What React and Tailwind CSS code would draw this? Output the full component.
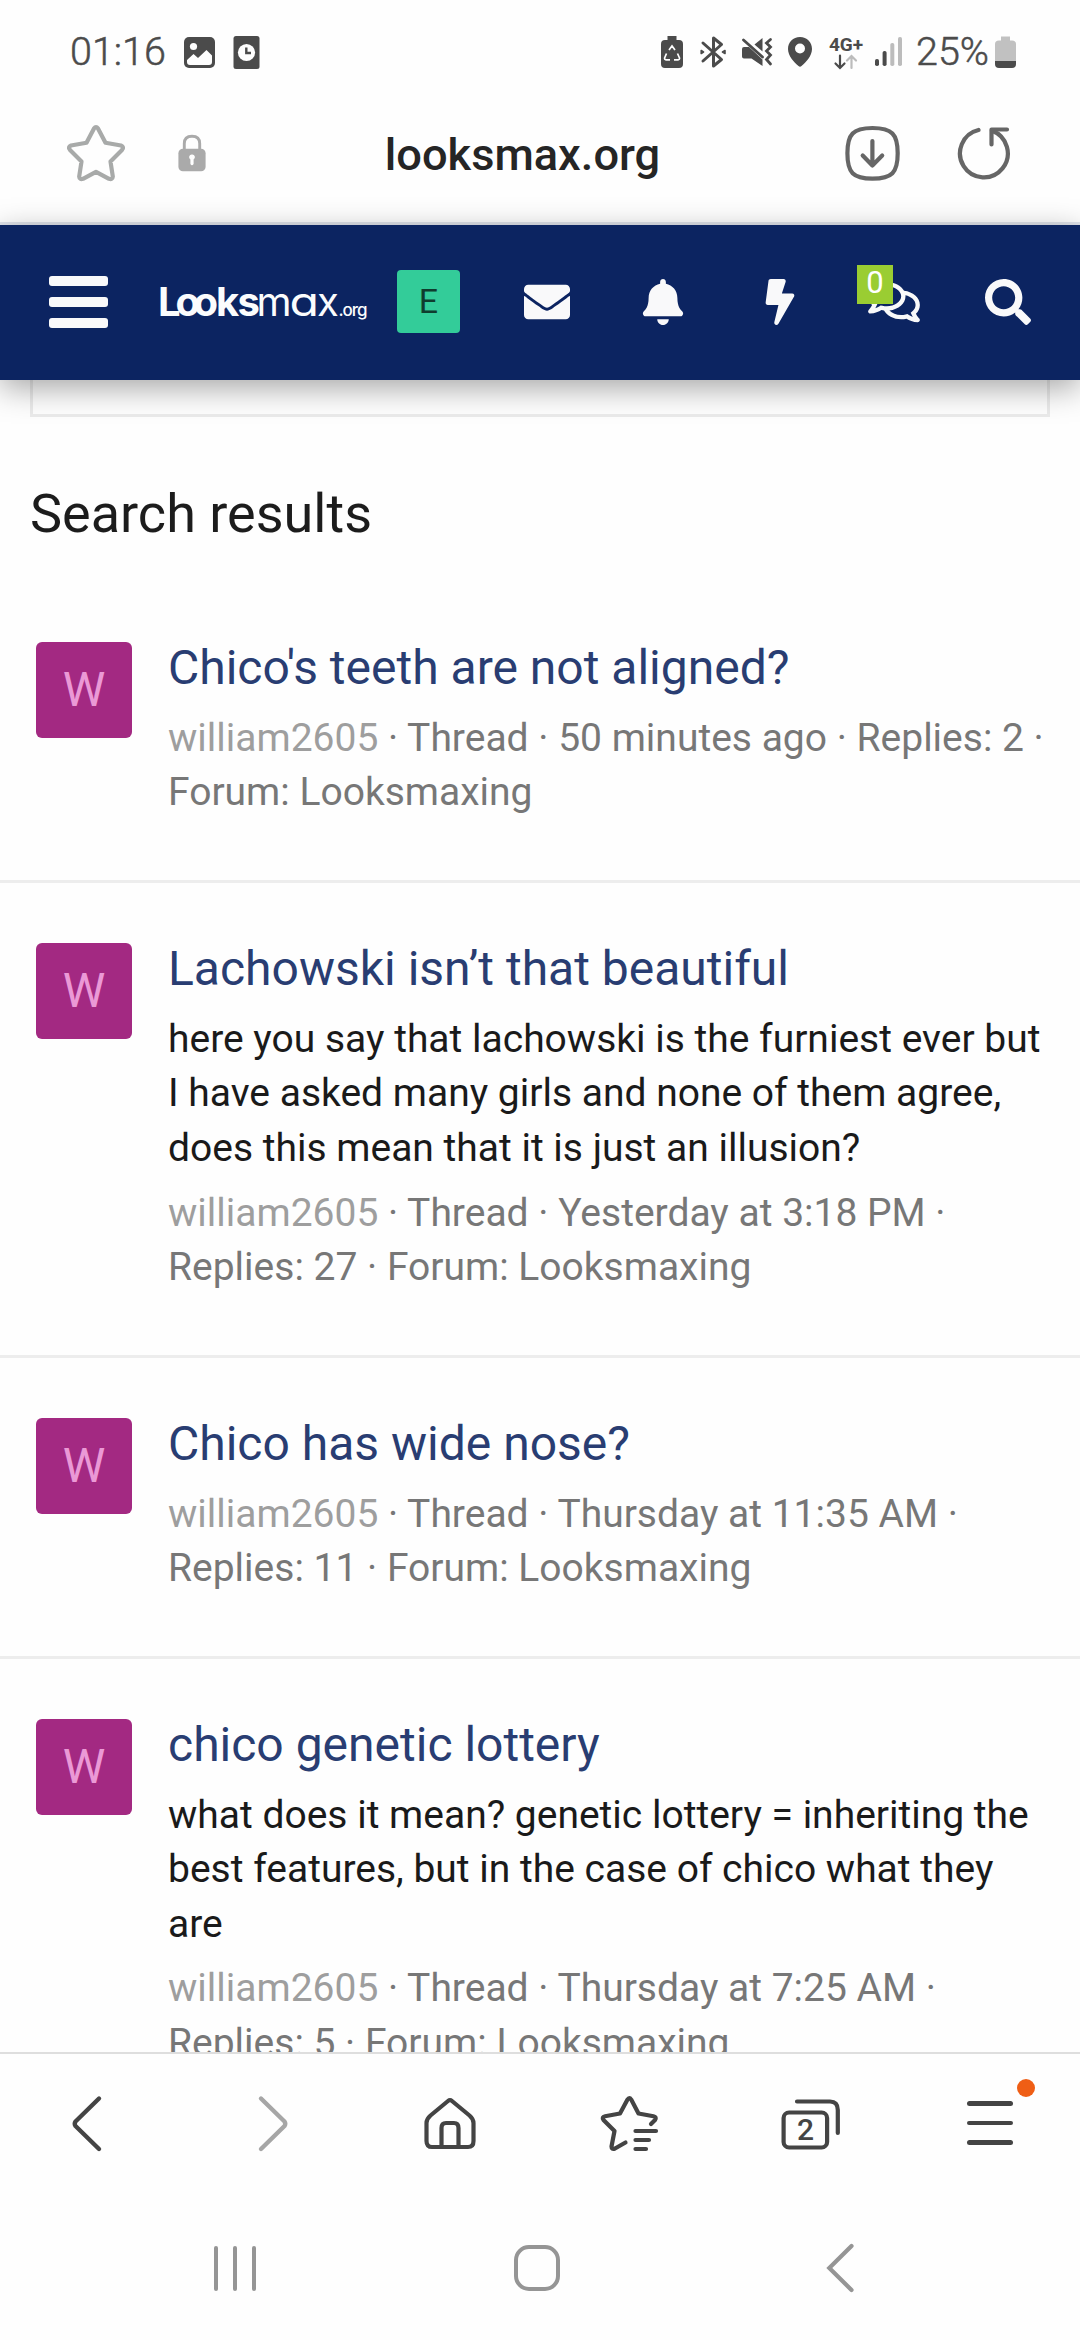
import React from 'react';
import { FaBell, FaBolt, FaEnvelope, FaRegComments, FaSearch } from 'react-icons/fa';

const results = [
    {
        title: "Chico's teeth are not aligned?",
        lines: ['50 minutes ago · Replies: 2 ·', 'Forum: Looksmaxing'],
    },
    {
        title: 'Lachowski isn’t that beautiful',
        snippet: [
            'here you say that lachowski is the furniest ever but',
            'I have asked many girls and none of them agree,',
            'does this mean that it is just an illusion?',
        ],
        lines: ['Yesterday at 3:18 PM ·', 'Replies: 27 · Forum: Looksmaxing'],
    },
    {
        title: 'Chico has wide nose?',
        lines: ['Thursday at 11:35 AM ·', 'Replies: 11 · Forum: Looksmaxing'],
    },
    {
        title: 'chico genetic lottery',
        snippet: [
            'what does it mean? genetic lottery = inheriting the',
            'best features, but in the case of chico what they',
            'are',
        ],
        lines: ['Thursday at 7:25 AM ·', 'Replies: 5 · Forum: Looksmaxing'],
    },
];

const StatusBar = () => (
    <div className="flex h-[104px] shrink-0 items-center pl-[70px] pr-[63px] text-[#4b4b4b]">
        <span className="w-[114px] whitespace-nowrap text-[39.5px] leading-[40px] font-light [-webkit-text-stroke:0.5px_#4b4b4b]">01:16</span>
        <svg className="h-[40px] w-[32px]" viewBox="0 0 32 40" fill="#4b4b4b">
            <rect x="0" y="5" width="31" height="31" rx="5" />
            <circle cx="9.5" cy="14.5" r="3.6" fill="#fefefe" />
            <path d="M3 28 L9.5 22 L14 26 L22.5 18 L28 23.5 V30 Q28 33 25 33 H6 Q3 33 3 30 Z" fill="#fefefe" />
        </svg>
        <svg className="ml-[17px] h-[40px] w-[28px]" viewBox="0 0 28 40" fill="#4b4b4b">
            <rect x="0.5" y="4" width="26" height="33" rx="2.5" />
            <circle cx="13.5" cy="20.5" r="8.6" fill="#fefefe" />
            <path d="M13.3 15.5 V21 H18" fill="none" stroke="#4b4b4b" strokeWidth="2.4" />
        </svg>
        <svg className="ml-auto h-[40px] w-[24px]" viewBox="0 0 24 40" fill="#4b4b4b">
            <path d="M7.5 4 H16.5 V8 H19 Q23 8 23 12 V32 Q23 36 19 36 H5 Q1 36 1 32 V12 Q1 8 5 8 H7.5 Z" />
            <path d="M9 18 L12 14 L15 18 M17.5 21.5 L19.5 26 Q19.8 27.7 18 27.8 H14 M6.5 21.5 L4.6 26 Q4.3 27.7 6 27.8 H10" fill="none" stroke="#fefefe" strokeWidth="1.7" />
        </svg>
        <svg className="ml-[15px] h-[40px] w-[28px]" viewBox="0 0 28 40" fill="none" stroke="#4b4b4b" strokeWidth="3" strokeLinejoin="round" strokeLinecap="round">
            <path d="M4 11 L22.5 27.5 L14.5 34 V6 L22.5 12.5 L4 29" />
            <path d="M2.2 18.5 L4.5 20 L2.2 21.5 Z M26 18.5 L23.5 20 L26 21.5 Z" fill="#4b4b4b" strokeWidth="1.6" />
        </svg>
        <svg className="ml-[14px] h-[40px] w-[32px]" viewBox="0 0 32 40" fill="#4b4b4b">
            <path d="M3 15 H8 L21.5 27.5 V34 L10.5 26.5 H3 Q1 26.5 1 24.5 V17 Q1 15 3 15 Z" />
            <path d="M21.5 6 V19.5 L13.5 12.5 Z" />
            <path d="M2.5 8 L21.5 25" stroke="#4b4b4b" strokeWidth="2.8" strokeLinecap="round" />
            <path d="M29.5 7.5 L25.5 11 L29.5 15 L25.5 19 L29.5 23 L25.5 27.5 L29.5 32" fill="none" stroke="#4b4b4b" strokeWidth="2.8" strokeLinecap="round" />
        </svg>
        <svg className="ml-[14px] h-[40px] w-[26px]" viewBox="0 0 26 40" fill="#4b4b4b">
            <path fillRule="evenodd" d="M13 5 C20 5 25 10 25 17 C25 24 19 30 14.5 34 Q13 35.3 11.5 34 C7 30 1 24 1 17 C1 10 6 5 13 5 Z M13 11.5 A5 5 0 1 0 13 21.5 A5 5 0 1 0 13 11.5 Z" />
        </svg>
        <div className="ml-[16px] flex h-[40px] w-[34px] flex-col items-center pt-[4px]">
            <span className="text-[19px] leading-[17px] font-bold">4G+</span>
            <svg className="mt-[1px] h-[16px] w-[26px]" viewBox="0 0 26 16" fill="none" strokeWidth="2.2" strokeLinecap="round">
                <path d="M7 1.5 V13.5 M2.5 9.5 L7 14 L11.5 9.5" stroke="#4b4b4b" />
                <path d="M18.5 14 V2 M14 6.5 L18.5 2 L23 6.5" stroke="#bcbcbc" />
            </svg>
        </div>
        <svg className="ml-[11px] h-[40px] w-[29px]" viewBox="0 0 29 40" fill="#4b4b4b">
            <rect x="1" y="27" width="4" height="7" rx="1.8" />
            <rect x="8.6" y="19" width="4" height="15" rx="1.8" />
            <rect x="16.3" y="11" width="4" height="23" rx="1.8" fill="#bcbcbc" />
            <rect x="24" y="5" width="4" height="29" rx="1.8" fill="#bcbcbc" />
        </svg>
        <span className="ml-[13px] w-[78px] whitespace-nowrap text-[39.5px] leading-[40px] font-light [-webkit-text-stroke:0.5px_#4b4b4b]">25%</span>
        <svg className="h-[40px] w-[23px]" viewBox="0 0 23 40">
            <path d="M7 4.5 H16 V8.5 H18 Q22 8.5 22 12 V29 H1 V12 Q1 8.5 5 8.5 H7 Z" fill="#c1c1c1" />
            <path d="M1 29 H22 V32 Q22 36 18 36 H5 Q1 36 1 32 Z" fill="#4b4b4b" />
        </svg>
    </div>
);

const AddressBar = () => (
    <div className="flex h-[121px] shrink-0 items-start border-b-[3px] border-[#e1e4eb] pl-[66px] pr-[68px] pt-[19px]">
        <svg className="h-[60px] w-[60px]" viewBox="0 0 60 60" fill="none" stroke="#a8aaa9" strokeWidth="4.2" strokeLinejoin="round">
            <path d="M28 5.5 Q30 2.5 32 5.5 L39.5 19.8 L55 22.5 Q58.5 24 56 27 L44.5 38.5 L46.8 53.5 Q46.5 57 43 55.8 L30 48.8 L17 55.8 Q13.5 57 13.2 53.5 L15.5 38.5 L4 27 Q1.5 24 5 22.5 L20.5 19.8 Z" />
        </svg>
        <svg className="ml-[50px] h-[60px] w-[32px]" viewBox="0 0 32 60" fill="#aaaaaa">
            <path d="M8.3 28 V20.5 Q8.3 13.2 16 13.2 Q23.7 13.2 23.7 20.5 V28" fill="none" stroke="#aaaaaa" strokeWidth="2.9" />
            <rect x="2.4" y="25.7" width="27.2" height="22.6" rx="4.5" />
            <path d="M16 31.5 A2.7 2.7 0 0 1 17.6 36.5 V41 Q16 43.5 14.4 41 V36.5 A2.7 2.7 0 0 1 16 31.5 Z" fill="#fefefe" />
        </svg>
        <div className="flex-1 pt-[5px] pr-[5px] text-center text-[45.2px] leading-[54px] font-medium text-[#252525]">looksmax.org</div>
        <svg className="h-[60px] w-[60px]" viewBox="0 0 60 60" fill="none" stroke="#666666" strokeWidth="4.2" strokeLinecap="round" strokeLinejoin="round">
            <path d="M30.5 5 C50 5 55.7 11 55.7 30.3 C55.7 49.6 50 55.6 30.5 55.6 C11 55.6 5.4 49.6 5.4 30.3 C5.4 11 11 5 30.5 5 Z" />
            <path d="M30.4 18 V42.5 M20.7 32.5 L30.4 42.5 L40.2 32.5" />
        </svg>
        <svg className="ml-[54px] h-[60px] w-[56px]" viewBox="0 0 56 60" fill="none" stroke="#666666" strokeWidth="4.2" strokeLinecap="round" strokeLinejoin="round">
            <path d="M22.5 7 A23.9 24 0 1 0 36 7.8" />
            <path d="M51 6.5 H35.5 V21.5" />
        </svg>
    </div>
);

// cv11 switches Inter to the single-storey "a" of the wordmark
const Logo = () => (
    <svg className="ml-[51px] h-[50px] w-[210px] font-['Inter',sans-serif] [font-feature-settings:'cv11']" viewBox="0 0 210 50" fill="#fbfcfd" fontSize="40">
        <text x="-1 16.5 34.5 57 78.5" y="39" fontWeight="650">Looks</text>
        <text y="39" fontWeight="400">
            <tspan x="97.5">m</tspan>
            <tspan x="130.5" textLength="29.5" lengthAdjust="spacingAndGlyphs">a</tspan>
            <tspan x="158">x</tspan>
        </text>
        <text x="179.5" y="39" fontSize="17" fontWeight="500" textLength="29">.org</text>
    </svg>
);

const NavBar = () => (
    <div className="relative z-10 flex h-[155px] shrink-0 items-center bg-[#0c2461] pl-[49px] pb-[2px] text-[46px] text-[#f9f9fa] shadow-[0_8px_30px_rgba(0,0,0,0.35)]">
        <div className="flex w-[59px] flex-col gap-[11px]">
            <div className="h-[10px] rounded-[3px] bg-[#f9f9fa]" />
            <div className="h-[10px] rounded-[3px] bg-[#f9f9fa]" />
            <div className="h-[10px] rounded-[3px] bg-[#f9f9fa]" />
        </div>
        <Logo />
        <div className="ml-[28px] flex h-[63px] w-[63px] items-center justify-center rounded-[4px] bg-[#33cc99] pb-[1px] text-[34px] text-[#0f3d2e]">
            E
        </div>
        <FaEnvelope className="ml-[64px]" />
        <FaBell className="ml-[70px]" />
        <FaBolt className="ml-[71px]" />
        <div className="relative ml-[65px]">
            <FaRegComments className="h-[46px] w-[52px]" />
            <span className="absolute -top-[14px] -left-[11px] flex h-[39px] w-[36px] items-center justify-center bg-[#9acd32] pb-[3px] text-[31px] leading-none text-white">
                0
            </span>
        </div>
        <FaSearch className="ml-[65px]" />
    </div>
);

const ResultRow = ({ result }) => (
    <div className="flex border-b-[3px] border-[#ededed] py-[60px] pl-[36px]">
        <div className="flex h-[96px] w-[96px] items-center justify-center rounded-[6px] bg-[#a32982] text-[48px] text-[#eb99d6]">
            W
        </div>
        <div className="ml-[36px] whitespace-nowrap text-[39px] leading-[54.6px]">
            <div className="-mt-[8px] mb-[9.6px] text-[48px] leading-[67.2px] text-[#293d72]">{result.title}</div>
            {result.snippet && (
                <div className="mb-[10px] text-[#1a1a1a]">
                    {result.snippet.map((line) => (
                        <div key={line}>{line}</div>
                    ))}
                </div>
            )}
            <div className="text-[#777777]">
                <div>
                    <span className="text-[#9e9e9e]">william2605</span> · Thread · {result.lines[0]}
                </div>
                <div>{result.lines[1]}</div>
            </div>
        </div>
    </div>
);

const BrowserBar = () => (
    <div className="flex h-[140px] shrink-0 items-center border-t-2 border-[#dedede] pl-[57px] text-[#444444]">
        <svg className="h-[80px] w-[60px]" viewBox="0 0 60 80" fill="none" stroke="#444444" strokeWidth="4.4" strokeLinecap="round" strokeLinejoin="round">
            <path d="M42 15.5 L18.5 38.5 Q17 40.8 18.5 43 L42 66" />
        </svg>
        <svg className="ml-[126px] h-[80px] w-[60px]" viewBox="0 0 60 80" fill="none" stroke="#a6a6a6" strokeWidth="4.4" strokeLinecap="round" strokeLinejoin="round">
            <path d="M18 15.5 L41.5 38.5 Q43 40.8 41.5 43 L18 66" />
        </svg>
        <svg className="ml-[117px] h-[80px] w-[60px]" viewBox="0 0 60 80" fill="none" stroke="#444444" strokeWidth="4.2" strokeLinejoin="round">
            <path d="M28 18 Q30 16.3 32 18 L49.5 32.5 Q53.5 36 53.5 40 V58 Q53.5 64 48 64 H12 Q6.5 64 6.5 58 V40 Q6.5 36 10.5 32.5 Z" />
            <path d="M21.5 64 V45 Q21.5 40 26 40 H34 Q38.5 40 38.5 45 V64" />
        </svg>
        <svg className="ml-[120px] h-[80px] w-[60px]" viewBox="0 0 60 80" fill="none" stroke="#444444" strokeWidth="4.2" strokeLinecap="round" strokeLinejoin="round">
            <path d="M25.5 59.5 L15 65.5 Q11.5 67 11.5 63.5 L14.5 48 L3.5 37 Q1.5 33.8 5 33.2 L20 30.5 L27.5 16.5 Q29.3 13.5 31.2 16.5 L38.5 30.5 L53.5 33.2 Q57 34 55 37 L51 41" />
            <path d="M35.5 48 H56 M35.5 57 H49 M35.5 66 H46" />
        </svg>
        <div className="relative ml-[120px]">
            <svg className="h-[80px] w-[62px]" viewBox="0 0 62 80" fill="none" stroke="#444444" strokeWidth="4.2" strokeLinecap="round">
                <rect x="3.6" y="29.5" width="43.5" height="35" rx="5.5" />
                <path d="M17 18.5 H50 Q57.8 18.5 57.8 27 V50" />
            </svg>
            <span className="absolute top-[31px] left-[3px] w-[45px] text-center text-[30px] leading-[32px] font-medium">2</span>
        </div>
        <div className="relative ml-[125px] flex w-[46px] flex-col gap-[15px]">
            <div className="h-[4.6px] rounded-full bg-[#444444]" />
            <div className="h-[4.6px] rounded-full bg-[#444444]" />
            <div className="h-[4.6px] rounded-full bg-[#444444]" />
            <span className="absolute -top-[22px] left-[50px] h-[18px] w-[18px] rounded-full bg-[#ef5e15]" />
        </div>
    </div>
);

const SystemNav = () => (
    <div className="flex h-[148px] shrink-0 items-center pl-[214px] pt-[4px]">
        <div className="flex h-[45px] w-[42px] justify-between">
            <div className="w-[4.4px] rounded-full bg-[#959595]" />
            <div className="w-[4.4px] rounded-full bg-[#959595]" />
            <div className="w-[4.4px] rounded-full bg-[#959595]" />
        </div>
        <div className="ml-[258px] h-[46px] w-[46px] rounded-[15px] border-4 border-[#959595]" />
        <svg className="ml-[266px] h-[50px] w-[30px]" viewBox="0 0 30 50" fill="none" stroke="#959595" strokeWidth="4.2" strokeLinecap="round">
            <path d="M25.5 3 L3.3 25 L25.5 47" />
        </svg>
    </div>
);

export default function App() {
    return (
        <div className="flex h-[2340px] w-[1080px] flex-col overflow-hidden bg-[#fefefe] font-['Roboto',sans-serif]">
            <StatusBar />
            <AddressBar />
            <NavBar />
            <div className="min-h-0 flex-1 overflow-hidden">
                <div className="mx-[30px] h-[37px] border-x-[3px] border-b-[3px] border-[#ebebeb]" />
                <h1 className="h-[165px] pt-[59px] pl-[30px] text-[54px] leading-[76px] text-[#1c1c1c]">Search results</h1>
                {results.map((result) => (
                    <ResultRow key={result.title} result={result} />
                ))}
            </div>
            <BrowserBar />
            <SystemNav />
        </div>
    );
}
